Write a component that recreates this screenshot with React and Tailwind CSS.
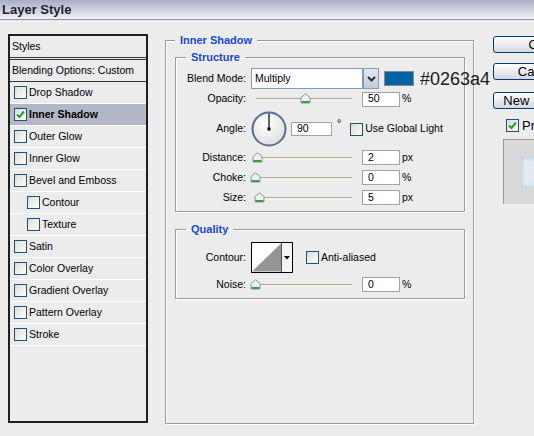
import React from "react";

const styles = [
  { label: "Drop Shadow" },
  { label: "Inner Shadow", checked: true, active: true },
  { label: "Outer Glow" },
  { label: "Inner Glow" },
  { label: "Bevel and Emboss" },
  { label: "Contour", indent: true },
  { label: "Texture", indent: true },
  { label: "Satin" },
  { label: "Color Overlay" },
  { label: "Gradient Overlay" },
  { label: "Pattern Overlay" },
  { label: "Stroke" },
];

const Checkbox = ({ checked }) => (
  <span className="w-[13px] h-[13px] shrink-0 border border-[#1c5180] bg-gradient-to-br from-[#dcdcd4] to-white flex items-center justify-center">
    {checked && (
      <svg width="9" height="9" viewBox="0 0 9 9">
        <path d="M1 4.5 L3.5 7 L8 1.5" fill="none" stroke="#21a121" strokeWidth="2" />
      </svg>
    )}
  </span>
);

const Thumb = () => (
  <svg width="11" height="11" viewBox="0 0 11 11">
    <path d="M1 4.5 L5.5 0.8 L10 4.5 L10 10 L1 10 Z" fill="#eef0f0" stroke="#8a9a96" strokeWidth="1" />
    <rect x="1.5" y="8" width="8" height="2" fill="#2fa33c" />
  </svg>
);

const Slider = ({ pos }) => (
  <div className="relative w-[111px] h-[14px] shrink-0">
    <div className="absolute left-[5px] top-[6px] w-[96px] h-[3px] border-t border-[#a9a9a0] bg-[#f4f2e8]" />
    <div className="absolute top-[1px]" style={{ left: pos }}>
      <Thumb />
    </div>
  </div>
);

const Field = ({ value, w = "w-[38px]", h = "h-[15px]" }) => (
  <div className={`${w} ${h} shrink-0 bg-white border border-[#a3a3a3] flex items-center pl-[5px]`}>
    {value}
  </div>
);

const Label = ({ children }) => (
  <span className="w-[61px] shrink-0 text-right pr-[1px] mr-[4px] whitespace-nowrap">{children}</span>
);

const SliderRow = ({ label, pos, value, unit, className = "" }) => (
  <div className={`flex items-center ${className}`}>
    <Label>{label}</Label>
    <Slider pos={pos} />
    <Field value={value} />
    <span className="ml-[2px]">{unit}</span>
  </div>
);

const Group = ({ title, className = "", children }) => (
  <fieldset className={`min-w-0 border border-[#9c9c9c] shadow-[1px_1px_0_#fff,inset_1px_1px_0_#fff] ${className}`}>
    <legend className="px-[5px] leading-[13px] text-[11px] font-bold text-[#1a46d6]">{title}</legend>
    {children}
  </fieldset>
);

const Button = ({ children, className = "" }) => (
  <div className={`w-[90px] h-[17px] rounded-[3px] border border-[#003c74] bg-gradient-to-b from-white to-[#d6d6e0] flex items-center justify-center leading-none whitespace-nowrap ${className}`}>
    {children}
  </div>
);

export default function App() {
  return (
    <div className="w-[534px] h-[436px] overflow-hidden bg-[#ececec] font-['Liberation_Sans',Arial,sans-serif] text-[10.5px] text-black">
      <div className="h-[20px] bg-gradient-to-b from-[#a9adc4] to-[#f2f2f6] border-b border-[#8d8fa0] pl-[2px] flex items-center">
        <span className="text-[13px] font-bold text-[#1f1f36]">Layer Style</span>
      </div>

      <div className="flex items-start">
        {/* styles list */}
        <div className="ml-[8px] mt-[14px] w-[140px] h-[389px] border-2 border-[#1e1e1e] shrink-0">
          <div className="h-[24px] pl-[2px] flex items-center border-b-[3px] border-double border-[#333]">Styles</div>
          <div className="h-[22px] pl-[2px] flex items-center border-b border-[#333]">Blending Options: Custom</div>
          {styles.map((s) => (
            <div
              key={s.label}
              className={`h-[22px] flex items-center gap-[2px] border-b border-white ${s.indent ? "pl-[17px]" : "pl-[4px]"} ${s.active ? "bg-[#b4b7c6] font-bold" : ""}`}
            >
              <Checkbox checked={s.checked} />
              <span>{s.label}</span>
            </div>
          ))}
        </div>

        {/* settings */}
        <Group title="Inner Shadow" className="ml-[17px] mt-[14px] w-[309px] h-[390px] px-[9px] shrink-0">
          <Group title="Structure" className="mt-[4px] w-[290px] pl-[10px] pb-[6px]">
            <div className="flex items-center mt-[4px] h-[21px] whitespace-nowrap">
              <Label>Blend Mode:</Label>
              <div className="w-[112px] h-[21px] shrink-0 bg-white border border-[#7f9db9] flex items-center pl-[3px]">Multiply</div>
              <div className="w-[16px] h-[21px] shrink-0 border border-[#7f9db9] bg-gradient-to-b from-[#e4e8f2] to-[#c3cbdc] flex items-center justify-center">
                <svg width="9" height="6" viewBox="0 0 9 6">
                  <path d="M1 1 L4.5 4.5 L8 1" fill="none" stroke="#2b2f3a" strokeWidth="2" />
                </svg>
              </div>
              <div className="ml-[5px] w-[30px] h-[15px] shrink-0 bg-[#0263a4] border border-[#8a8a8a]" />
              <span className="ml-[6px] shrink-0 text-[18px] leading-none text-[#1a1a1a]">#0263a4</span>
            </div>

            <SliderRow label="Opacity:" pos="49px" value="50" unit="%" className="mt-[3px] h-[14px]" />

            <div className="flex items-center mt-[5px] h-[36px]">
              <Label>Angle:</Label>
              <svg width="36" height="36" viewBox="0 0 36 36" className="shrink-0">
                <defs>
                  <radialGradient id="dial" cx="0.4" cy="0.35" r="0.7">
                    <stop offset="0" stopColor="#ffffff" />
                    <stop offset="1" stopColor="#dedede" />
                  </radialGradient>
                </defs>
                <circle cx="18" cy="18" r="16.5" fill="url(#dial)" stroke="#5a6e92" strokeWidth="2" />
                <line x1="18" y1="18" x2="18" y2="2.5" stroke="#000" strokeWidth="1.2" />
                <rect x="16.5" y="16.5" width="3" height="3" fill="#000" />
              </svg>
              <span className="w-[4px]" />
              <Field value="90" w="w-[41px]" h="h-[14px]" />
              <span className="ml-[5px] self-start mt-[7px] leading-none">°</span>
              <span className="ml-[9px]" />
              <Checkbox />
              <span className="ml-[2px] whitespace-nowrap">Use Global Light</span>
            </div>

            <SliderRow label="Distance:" pos="1px" value="2" unit="px" className="mt-[3px] h-[15px]" />
            <SliderRow label="Choke:" pos="-1px" value="0" unit="%" className="mt-[5px] h-[15px]" />
            <SliderRow label="Size:" pos="3px" value="5" unit="px" className="mt-[5px] h-[15px]" />
          </Group>

          <Group title="Quality" className="mt-[11px] w-[290px] pl-[10px] pb-[6px]">
            <div className="flex items-center mt-[6px] h-[31px]">
              <Label>Contour:</Label>
              <div className="w-[42px] h-[31px] shrink-0 border border-black bg-white flex">
                <svg width="30" height="29" viewBox="0 0 30 29" className="border-r border-[#555]">
                  <rect width="30" height="29" fill="#ffffff" />
                  <path d="M0 29 L30 0 L30 29 Z" fill="#959595" />
                </svg>
                <div className="flex-1 bg-[#f4f4f4] flex items-center justify-center">
                  <svg width="6" height="4" viewBox="0 0 6 4">
                    <path d="M0 0 L6 0 L3 3.5 Z" fill="#000" />
                  </svg>
                </div>
              </div>
              <span className="ml-[13px]" />
              <Checkbox />
              <span className="ml-[2px]">Anti-aliased</span>
            </div>
            <SliderRow label="Noise:" pos="-1px" value="0" unit="%" className="mt-[4px] h-[15px]" />
          </Group>
        </Group>

        {/* buttons */}
        <div className="ml-[19px] mt-[16px] w-[100px] shrink-0 text-[13px]">
          <Button>OK</Button>
          <Button className="mt-[10px]">Cancel</Button>
          <Button className="mt-[12px]">New Style...</Button>
          <div className="mt-[10px] ml-[13px] flex items-center gap-[3px] h-[13px]">
            <Checkbox checked />
            <span>Preview</span>
          </div>
          <div className="mt-[7px] ml-[10px] w-[90px] h-[65px] bg-[#d9d9d9] border-l border-t border-[#9a9a9a] pt-[17px] pl-[17px]">
            <div className="w-[60px] h-[31px] bg-[#e3ebf2] shadow-[inset_0_0_5px_#a9bfd8]" />
          </div>
        </div>
      </div>
    </div>
  );
}
